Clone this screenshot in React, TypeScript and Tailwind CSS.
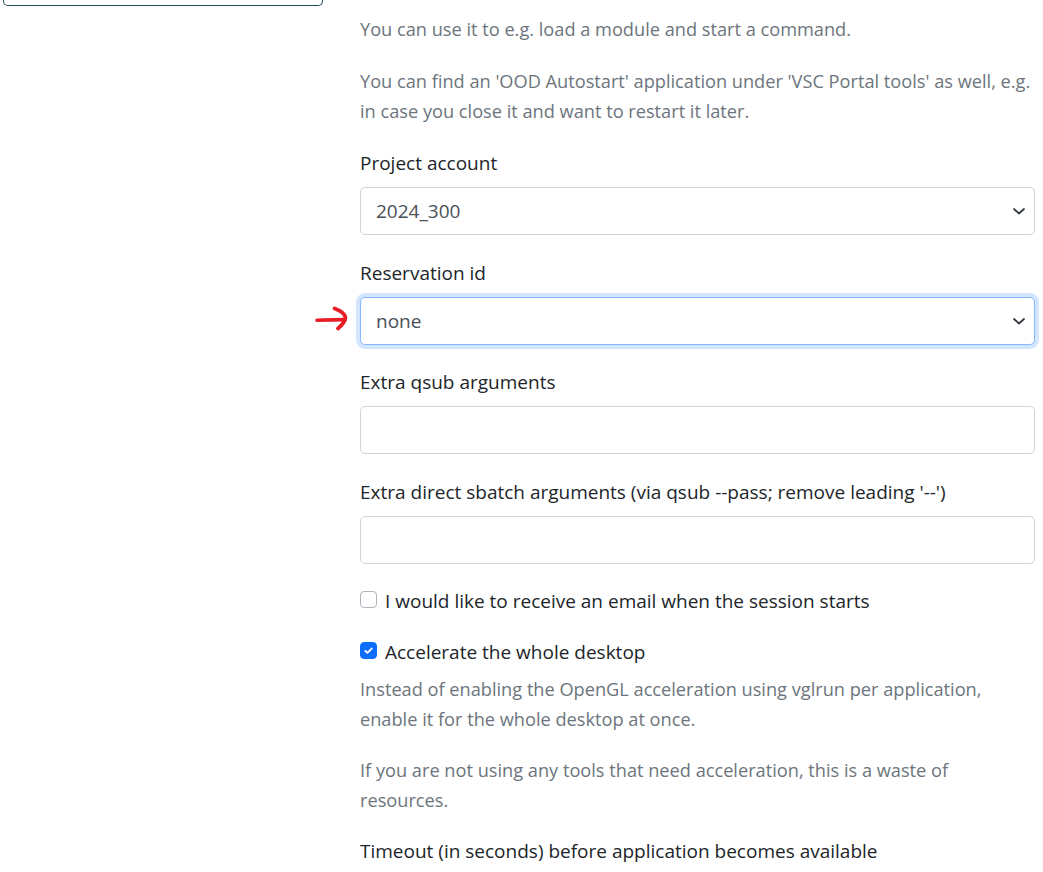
import { useState } from "react";

const projectAccounts = ["2024_300"];
const reservations = ["none"];

const Chevron = () => (
  <svg
    className="pointer-events-none absolute right-[8px] top-1/2 -translate-y-1/2"
    width="16"
    height="16"
    viewBox="0 0 16 16"
    fill="none"
  >
    <path d="M3 6l5 4.5L13 6" stroke="#343a40" strokeWidth="1.8" strokeLinecap="round" strokeLinejoin="round" />
  </svg>
);

// hand-drawn annotation pointing at the reservation select
const RedArrow = () => (
  <svg
    className="absolute left-[-46px] top-1/2 -translate-y-1/2"
    width="40"
    height="30"
    viewBox="0 0 40 30"
    fill="none"
  >
    <path d="M3 14.2 C 12 14, 22 13.8, 31 13.6" stroke="#e81c24" strokeWidth="3.6" strokeLinecap="round" />
    <path
      d="M20.5 2.5 Q 30.5 6, 31.5 11.5 Q 31 16.5, 24 22.5"
      stroke="#e81c24"
      strokeWidth="3.8"
      strokeLinecap="round"
      strokeLinejoin="round"
    />
  </svg>
);

interface SelectFieldProps {
  label: string;
  options: string[];
  focused?: boolean;
  annotated?: boolean;
}

const SelectField = ({ label, options, focused, annotated }: SelectFieldProps) => {
  const [value, setValue] = useState(options[0]);
  return (
    <div className="mb-[22.5px]">
      <label className="mb-[9px] block text-[#212529]">{label}</label>
      <div className="relative">
        {annotated && <RedArrow />}
        <select
          value={value}
          onChange={(e) => setValue(e.target.value)}
          className={`block h-[48px] w-full appearance-none rounded-[5px] border bg-white pl-[15px] pr-10 text-[#495057] outline-none ${
            focused
              ? "border-[#86b7fe] shadow-[0_0_0_4px_rgba(13,110,253,0.18)]"
              : "border-[#ced4da]"
          }`}
        >
          {options.map((o) => (
            <option key={o}>{o}</option>
          ))}
        </select>
        <Chevron />
      </div>
    </div>
  );
};

const TextField = ({ label }: { label: string }) => (
  <div className="mb-[22.5px]">
    <label className="mb-[9px] block text-[#212529]">{label}</label>
    <input
      type="text"
      className="block h-[48px] w-full rounded-[5px] border border-[#ced4da] bg-white px-[15px] text-[#495057] outline-none"
    />
  </div>
);

const CheckBox = ({ checked, onClick }: { checked: boolean; onClick: () => void }) => (
  <button
    type="button"
    onClick={onClick}
    className={`mt-[5px] flex h-[17px] w-[17px] shrink-0 items-center justify-center rounded-[4px] border ${
      checked ? "border-[#0d6efd] bg-[#0d6efd]" : "border-[#adb5bd] bg-white"
    }`}
  >
    {checked && (
      <svg width="13" height="13" viewBox="0 0 20 20" fill="none">
        <path d="M5 10.5l3.2 3.2L15 7" stroke="white" strokeWidth="2.8" strokeLinecap="round" strokeLinejoin="round" />
      </svg>
    )}
  </button>
);

export default function App() {
  const [emailMe, setEmailMe] = useState(false);
  const [accelerate, setAccelerate] = useState(true);

  return (
    <div className="flex min-h-screen bg-white font-['Open_Sans',sans-serif] text-[19px] leading-[30px]">
      {/* left column with the bottom of the previous panel */}
      <div className="w-[360px] shrink-0 pl-[3px]">
        <div className="h-[6px] w-[320px] rounded-b-[5px] border border-t-0 border-[#1e4a5c]" />
      </div>

      <div className="w-[675px] shrink-0 pt-[14px]">
        <p className="mb-[22px] text-[18.2px] text-[#6c757d]">
          You can use it to e.g. load a module and start a command.
        </p>
        <p className="mb-[22px] text-[18.2px] text-[#6c757d]">
          You can find an 'OOD Autostart' application under 'VSC Portal tools' as well, e.g. in case you close it and
          want to restart it later.
        </p>

        <SelectField label="Project account" options={projectAccounts} />
        <SelectField label="Reservation id" options={reservations} focused annotated />
        <TextField label="Extra qsub arguments" />
        <TextField label="Extra direct sbatch arguments (via qsub --pass; remove leading '--')" />

        <div className="mb-[21px] flex gap-[8px] text-[#212529]">
          <CheckBox checked={emailMe} onClick={() => setEmailMe(!emailMe)} />
          <span>I would like to receive an email when the session starts</span>
        </div>

        <div className="mb-[21px]">
          <div className="flex gap-[8px] text-[#212529]">
            <CheckBox checked={accelerate} onClick={() => setAccelerate(!accelerate)} />
            <span>Accelerate the whole desktop</span>
          </div>
          <div className="mt-[7px] text-[18.2px] text-[#6c757d]">
            <p className="mb-[21px]">
              Instead of enabling the OpenGL acceleration using vglrun per application, enable it for the whole desktop
              at once.
            </p>
            <p>If you are not using any tools that need acceleration, this is a waste of resources.</p>
          </div>
        </div>

        <label className="block text-[#212529]">Timeout (in seconds) before application becomes available</label>
      </div>
    </div>
  );
}
